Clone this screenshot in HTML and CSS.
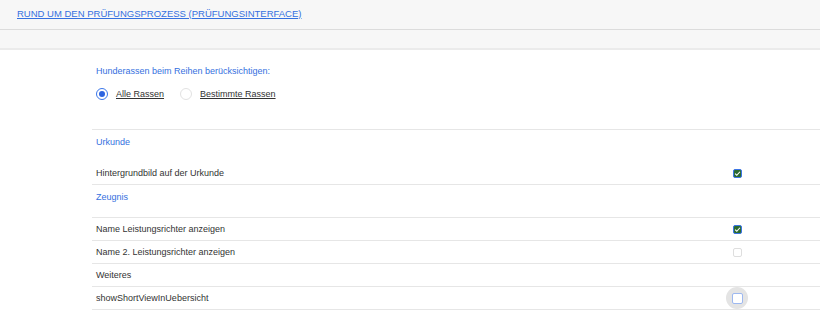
FILE: index.html
```html
<!DOCTYPE html>
<html lang="de">
<head>
    <meta charset="UTF-8">
    <meta name="viewport" content="width=device-width, initial-scale=1.0">
    <title>Prüfungsinterface</title>
    <link rel="stylesheet" href="styles.css">
</head>
<body>
    <div class="page-header">
        <a href="#" class="page-title">RUND UM DEN PRÜFUNGSPROZESS (PRÜFUNGSINTERFACE)</a>
    </div>
    <div class="toolbar"></div>

    <div class="settings">
        <div class="breeds">
            <div class="section-label">Hunderassen beim Reihen berücksichtigen:</div>
            <div class="radio-group">
                <label class="radio-option">
                    <span class="radio checked"></span>
                    <span class="radio-text">Alle Rassen</span>
                </label>
                <label class="radio-option">
                    <span class="radio"></span>
                    <span class="radio-text">Bestimmte Rassen</span>
                </label>
            </div>
        </div>

        <div class="section-head no-line">Urkunde</div>
        <div class="row">
            <span class="row-label">Hintergrundbild auf der Urkunde</span>
            <span class="check-cell">
                <span class="checkbox checked">
                    <svg viewBox="0 0 10 10" width="7" height="7"><path d="M1.5 5.2 L4 7.5 L8.5 2.5" fill="none" stroke="#fff" stroke-width="1.6"/></svg>
                </span>
            </span>
        </div>

        <div class="section-head">Zeugnis</div>
        <div class="row">
            <span class="row-label">Name Leistungsrichter anzeigen</span>
            <span class="check-cell">
                <span class="checkbox checked">
                    <svg viewBox="0 0 10 10" width="7" height="7"><path d="M1.5 5.2 L4 7.5 L8.5 2.5" fill="none" stroke="#fff" stroke-width="1.6"/></svg>
                </span>
            </span>
        </div>
        <div class="row">
            <span class="row-label">Name 2. Leistungsrichter anzeigen</span>
            <span class="check-cell"><span class="checkbox"></span></span>
        </div>
        <div class="row">
            <span class="row-label">Weiteres</span>
        </div>
        <div class="row">
            <span class="row-label">showShortViewInUebersicht</span>
            <span class="check-cell">
                <span class="focus-ring"><span class="checkbox focused"></span></span>
            </span>
        </div>
    </div>
</body>
</html>
```

FILE: styles.css
```css
body {
    margin: 0;
    font-family: "Liberation Sans", Arial, sans-serif;
    font-size: 9px;
    color: #333;
    background: #fff;
}
.page-header {
    height: 29px;
    padding-left: 17px;
    background-color: #f7f7f7;
    border-bottom: 1px solid #dcdcdc;
    display: flex;
    align-items: center;
}
.page-title {
    color: #3570e0;
    font-size: 9.5px;
    text-decoration: underline;
    margin-top: -3px;
}
.toolbar {
    height: 18px;
    background-color: #f7f7f7;
    border-bottom: 2px solid #ebebeb;
}
.settings {
    margin-left: 92px;
}
.breeds {
    height: 64px;
    padding: 15px 0 0 4px;
    border-bottom: 1px solid #e6e6e6;
}
.section-label {
    color: #3570e0;
    line-height: 12px;
}
.radio-group {
    display: flex;
    gap: 16px;
    margin-top: 11px;
}
.radio-option {
    display: flex;
    align-items: center;
    gap: 8px;
}
.radio {
    width: 12px;
    height: 12px;
    border: 1px solid #e2e2e2;
    border-radius: 50%;
    box-sizing: border-box;
    display: flex;
    align-items: center;
    justify-content: center;
}
.radio.checked {
    border-color: #3a76ea;
}
.radio.checked::after {
    content: "";
    width: 6px;
    height: 6px;
    border-radius: 50%;
    background-color: #2d64e0;
}
.radio-text {
    text-decoration: underline;
    color: #333;
}
.section-head {
    color: #3570e0;
    height: 32px;
    line-height: 24px;
    padding-left: 4px;
    border-bottom: 1px solid #e6e6e6;
}
.section-head.no-line {
    border-bottom: none;
}
.row {
    display: flex;
    align-items: center;
    height: 22px;
    padding-left: 4px;
    border-bottom: 1px solid #e6e6e6;
}
.row-label {
    flex: 1;
}
.check-cell {
    width: 22px;
    margin-right: 72px;
    display: flex;
    justify-content: center;
    align-items: center;
}
.checkbox {
    width: 9px;
    height: 9px;
    box-sizing: border-box;
    border: 1px solid #dedede;
    border-radius: 2px;
    display: flex;
    align-items: center;
    justify-content: center;
}
.checkbox.checked {
    background-color: #2b6a30;
    border-color: #3b74e6;
}
.focus-ring {
    width: 22px;
    height: 22px;
    flex-shrink: 0;
    border-radius: 50%;
    background-color: #e4e4e4;
    display: flex;
    align-items: center;
    justify-content: center;
}
.checkbox.focused {
    width: 11px;
    height: 11px;
    background-color: #fff;
    border: 1.5px solid #9db8f0;
}
```
